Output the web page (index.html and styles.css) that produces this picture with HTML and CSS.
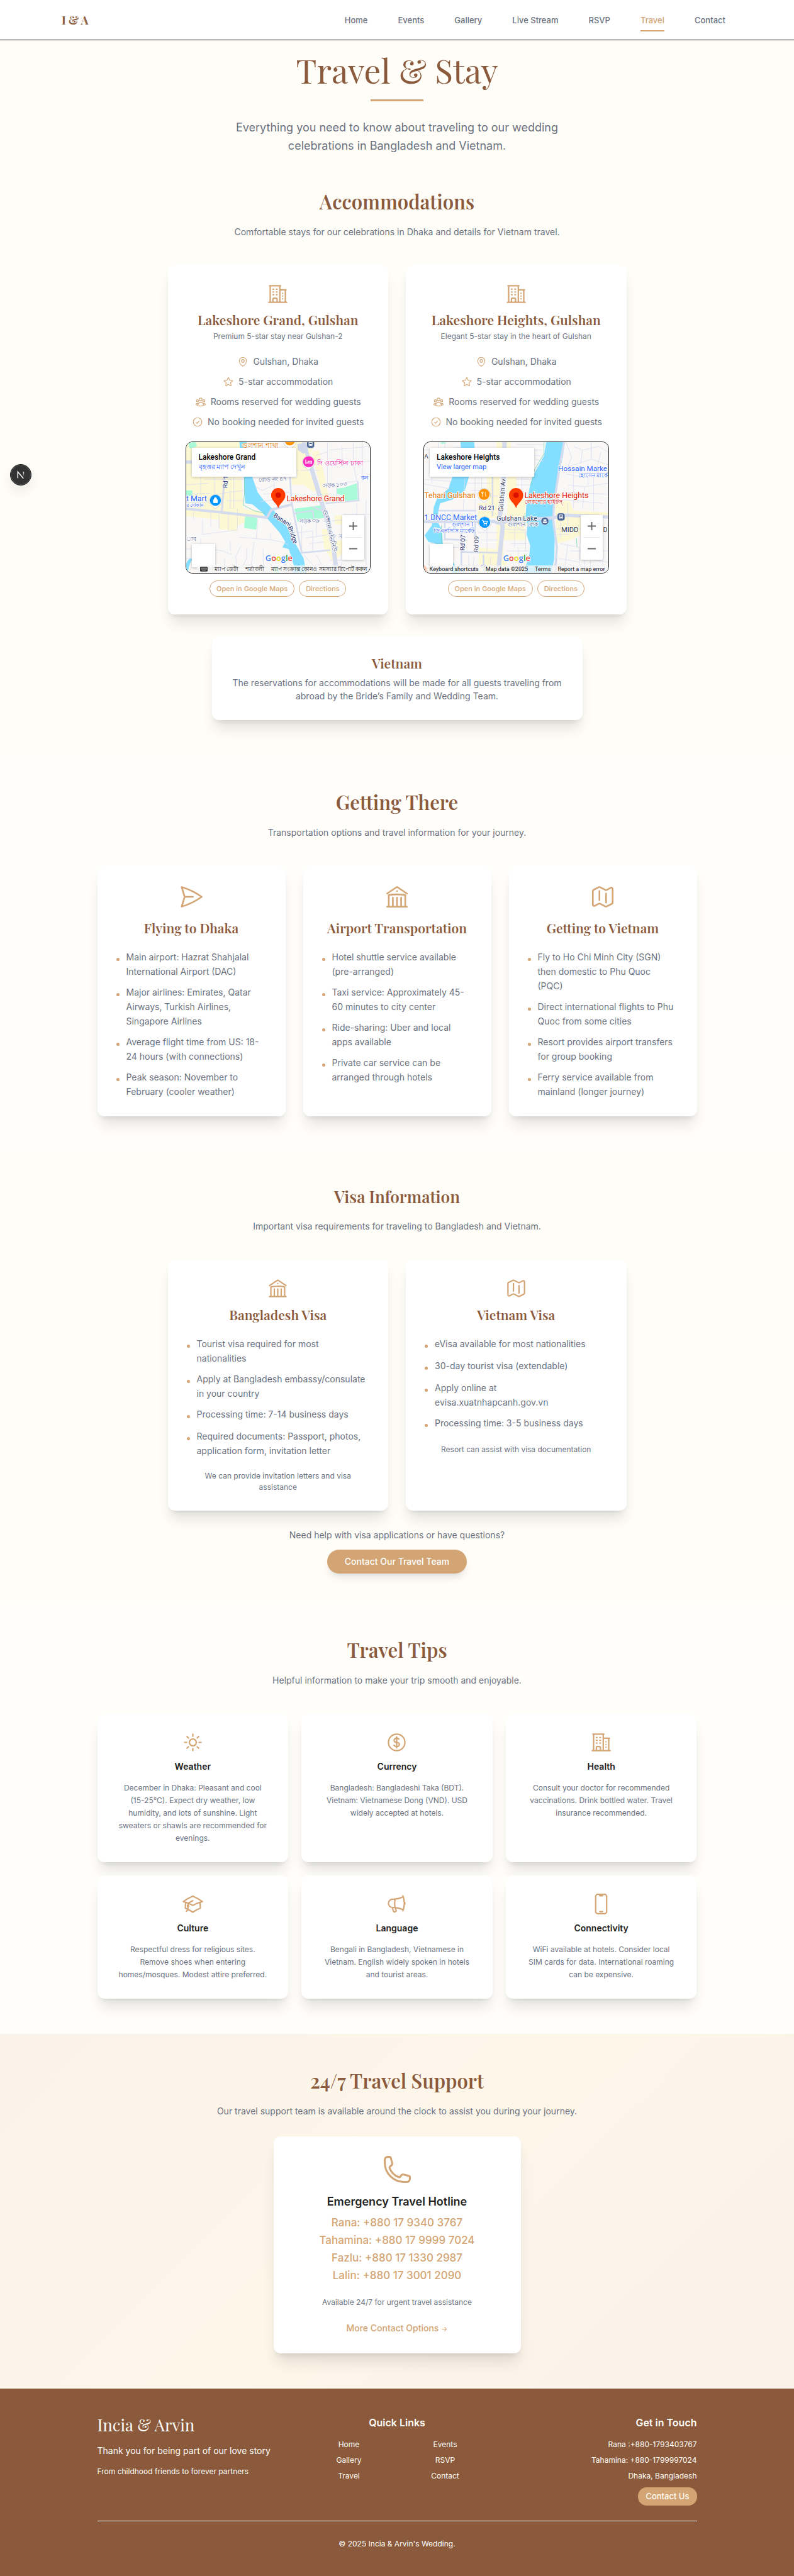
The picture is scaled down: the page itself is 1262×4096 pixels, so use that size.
FILE: index.html
```html
<!DOCTYPE html>
<html lang="en">
<head>
<meta charset="utf-8">
<meta name="viewport" content="width=device-width, initial-scale=1">
<title>Travel &amp; Stay | Incia &amp; Arvin</title>
<link rel="stylesheet" href="styles.css">
</head>
<body>
<svg class="sprite" aria-hidden="true">
  <symbol id="i-building" viewBox="0 0 24 24"><path d="M2.25 21h19.5m-18-18v18m10.5-18v18m6-13.5V21M6.75 6.75h.75m-.75 3h.75m-.75 3h.75m3-6h.75m-.75 3h.75m-.75 3h.75M6.75 21v-3.375c0-.621.504-1.125 1.125-1.125h2.25c.621 0 1.125.504 1.125 1.125V21M3 3h12m-.75 4.5H21m-3.75 3.75h.008v.008h-.008v-.008Zm0 3h.008v.008h-.008v-.008Zm0 3h.008v.008h-.008v-.008Z"/></symbol>
  <symbol id="i-pin" viewBox="0 0 24 24"><path d="M15 10.5a3 3 0 1 1-6 0 3 3 0 0 1 6 0Z"/><path d="M19.5 10.5c0 7.142-7.5 11.25-7.5 11.25S4.5 17.642 4.5 10.5a7.5 7.5 0 1 1 15 0Z"/></symbol>
  <symbol id="i-star" viewBox="0 0 24 24"><path d="M11.48 3.499a.562.562 0 0 1 1.04 0l2.125 5.111a.563.563 0 0 0 .475.345l5.518.442c.499.04.701.663.321.988l-4.204 3.602a.563.563 0 0 0-.182.557l1.285 5.385a.562.562 0 0 1-.84.61l-4.725-2.885a.562.562 0 0 0-.586 0L6.982 20.54a.562.562 0 0 1-.84-.61l1.285-5.386a.562.562 0 0 0-.182-.557l-4.204-3.602a.562.562 0 0 1 .321-.988l5.518-.442a.563.563 0 0 0 .475-.345L11.48 3.5Z"/></symbol>
  <symbol id="i-group" viewBox="0 0 24 24"><path d="M18 18.72a9.094 9.094 0 0 0 3.741-.479 3 3 0 0 0-4.682-2.72m.94 3.198.001.031c0 .225-.012.447-.037.666A11.944 11.944 0 0 1 12 21c-2.17 0-4.207-.576-5.963-1.584A6.062 6.062 0 0 1 6 18.719m12 0a5.971 5.971 0 0 0-.941-3.197m0 0A5.995 5.995 0 0 0 12 12.75a5.995 5.995 0 0 0-5.058 2.772m0 0a3 3 0 0 0-4.681 2.72 8.986 8.986 0 0 0 3.74.477m.94-3.197a5.971 5.971 0 0 0-.94 3.197M15 6.75a3 3 0 1 1-6 0 3 3 0 0 1 6 0Zm6 3a2.25 2.25 0 1 1-4.5 0 2.25 2.25 0 0 1 4.5 0Zm-13.5 0a2.25 2.25 0 1 1-4.5 0 2.25 2.25 0 0 1 4.5 0Z"/></symbol>
  <symbol id="i-check" viewBox="0 0 24 24"><path d="M9 12.75 11.25 15 15 9.75M21 12a9 9 0 1 1-18 0 9 9 0 0 1 18 0Z"/></symbol>
  <symbol id="i-plane" viewBox="0 0 24 24"><path d="M6 12 3.269 3.125A59.769 59.769 0 0 1 21.485 12 59.768 59.768 0 0 1 3.27 20.875L5.999 12Zm0 0h7.5"/></symbol>
  <symbol id="i-library" viewBox="0 0 24 24"><path d="M12 21v-8.25M15.75 21v-8.25M8.25 21v-8.25M3 9l9-6 9 6m-1.5 12V10.332A48.36 48.36 0 0 0 12 9.75c-2.551 0-5.056.2-7.5.582V21M3 21h18M12 6.75h.008v.008H12V6.75Z"/></symbol>
  <symbol id="i-map" viewBox="0 0 24 24"><path d="M9 6.75V15m6-6v8.25m.503 3.498 4.875-2.437c.381-.19.622-.58.622-1.006V4.82c0-.836-.88-1.38-1.628-1.006l-3.869 1.934c-.317.159-.69.159-1.006 0L9.503 3.252a1.125 1.125 0 0 0-1.006 0L3.622 5.689C3.24 5.88 3 6.27 3 6.695V19.18c0 .836.88 1.38 1.628 1.006l3.869-1.934c.317-.159.69-.159 1.006 0l4.994 2.497c.317.158.69.158 1.006 0Z"/></symbol>
  <symbol id="i-sun" viewBox="0 0 24 24"><path d="M12 3v2.25m6.364.386-1.591 1.591M21 12h-2.25m-.386 6.364-1.591-1.591M12 18.75V21m-4.773-4.227-1.591 1.591M5.25 12H3m4.227-4.773L5.636 5.636M15.75 12a3.75 3.75 0 1 1-7.5 0 3.75 3.75 0 0 1 7.5 0Z"/></symbol>
  <symbol id="i-dollar" viewBox="0 0 24 24"><path d="M12 6v12m-3-2.818.879.659c1.171.879 3.07.879 4.242 0 1.172-.879 1.172-2.303 0-3.182C13.536 12.219 12.768 12 12 12c-.725 0-1.45-.22-2.003-.659-1.106-.879-1.106-2.303 0-3.182s2.9-.879 4.006 0l.415.33M21 12a9 9 0 1 1-18 0 9 9 0 0 1 18 0Z"/></symbol>
  <symbol id="i-cap" viewBox="0 0 24 24"><path d="M4.26 10.147a60.438 60.438 0 0 0-.491 6.347A48.62 48.62 0 0 1 12 20.904a48.62 48.62 0 0 1 8.232-4.41 60.46 60.46 0 0 0-.491-6.347m-15.482 0a50.636 50.636 0 0 0-2.658-.813A59.906 59.906 0 0 1 12 3.493a59.903 59.903 0 0 1 10.399 5.84c-.896.248-1.783.52-2.658.814m-15.482 0A50.717 50.717 0 0 1 12 13.489a50.702 50.702 0 0 1 7.74-3.342M6.75 15a.75.75 0 1 0 0-1.5.75.75 0 0 0 0 1.5Zm0 0v-3.675A55.378 55.378 0 0 1 12 8.443m-7.007 11.55A5.981 5.981 0 0 0 6.75 15.75v-1.5"/></symbol>
  <symbol id="i-horn" viewBox="0 0 24 24"><path d="M10.34 15.84c-.688-.06-1.386-.09-2.09-.09H7.5a4.5 4.5 0 1 1 0-9h.75c.704 0 1.402-.03 2.09-.09m0 9.18c.253.962.584 1.892.985 2.783.247.55.06 1.21-.463 1.511l-.657.38c-.551.318-1.26.117-1.527-.461a20.845 20.845 0 0 1-1.44-4.282m3.102.069a18.03 18.03 0 0 1-.59-4.59c0-1.586.205-3.124.59-4.59m0 9.18a23.848 23.848 0 0 1 8.835 2.535M10.34 6.66a23.847 23.847 0 0 0 8.835-2.535m0 0A23.74 23.74 0 0 0 18.795 3m.38 1.125a23.91 23.91 0 0 1 1.014 5.395m-1.014 8.855c-.118.38-.245.754-.38 1.125m.38-1.125a23.91 23.91 0 0 0 1.014-5.395m0-3.46c.495.413.811 1.035.811 1.73 0 .695-.316 1.317-.811 1.73m0-3.46a24.347 24.347 0 0 1 0 3.46"/></symbol>
  <symbol id="i-mobile" viewBox="0 0 24 24"><path d="M10.5 1.5H8.25A2.25 2.25 0 0 0 6 3.75v16.5a2.25 2.25 0 0 0 2.25 2.25h7.5A2.25 2.25 0 0 0 18 20.25V3.75a2.25 2.25 0 0 0-2.25-2.25H13.5m-3 0V3h3V1.5m-3 0h3m-3 18.75h3"/></symbol>
  <symbol id="i-phone" viewBox="0 0 24 24"><path d="M2.25 6.75c0 8.284 6.716 15 15 15h2.25a2.25 2.25 0 0 0 2.25-2.25v-1.372c0-.516-.351-.966-.852-1.091l-4.423-1.106c-.44-.11-.902.055-1.173.417l-.97 1.293c-.282.376-.769.542-1.21.38a12.035 12.035 0 0 1-7.143-7.143c-.162-.441.004-.928.38-1.21l1.293-.97c.363-.271.527-.734.417-1.173L6.963 3.102a1.125 1.125 0 0 0-1.091-.852H4.5A2.25 2.25 0 0 0 2.25 4.5v2.25Z"/></symbol>
  <symbol id="m-drop" viewBox="0 0 76 84"><path d="M38 83 L26 70 A34 34 0 1 1 50 70 Z" fill="#fff" stroke="#b9b9b9" stroke-width="2"/></symbol>
  <symbol id="m-place" viewBox="0 0 80 112"><path d="M40 111C36 84 1 70 1 39a39 39 0 0 1 78 0C79 70 44 84 40 111Z" fill="#ff3c00"/><circle cx="40" cy="39" r="15" fill="#d90f00"/></symbol>
  <symbol id="m-transit" viewBox="0 0 42 42"><rect x="1" y="1" width="40" height="40" rx="13" fill="#46618f" stroke="#fff" stroke-width="2"/><rect x="11" y="9" width="20" height="20" rx="4" fill="#fff"/><rect x="14" y="13" width="14" height="7" fill="#46618f"/><circle cx="16" cy="25" r="2" fill="#46618f"/><circle cx="26" cy="25" r="2" fill="#46618f"/><path d="M13 32l3-4M29 32l-3-4" stroke="#fff" stroke-width="3"/></symbol>
</svg>

<header class="nav">
  <a class="nav-brand" href="#">I &amp; A</a>
  <nav class="nav-links" aria-label="Main">
    <a href="#">Home</a><a href="#">Events</a><a href="#">Gallery</a><a href="#">Live Stream</a><a href="#">RSVP</a><a class="active" href="#" aria-current="page">Travel</a><a href="#">Contact</a>
  </nav>
</header>

<main>
  <section class="section section-first">
    <div class="hero">
      <h1>Travel &amp; Stay</h1>
      <div class="rule"></div>
      <p>Everything you need to know about traveling to our wedding celebrations in Bangladesh and Vietnam.</p>
    </div>
    <h2>Accommodations</h2>
    <p class="lead">Comfortable stays for our celebrations in Dhaka and details for Vietnam travel.</p>
    <div class="grid two">
      <article class="card hotel">
        <svg class="icon"><use href="#i-building"/></svg>
        <h3>Lakeshore Grand, Gulshan</h3>
        <p class="small">Premium 5-star stay near Gulshan-2</p>
        <ul class="facts">
          <li><svg><use href="#i-pin"/></svg>Gulshan, Dhaka</li>
          <li><svg><use href="#i-star"/></svg>5-star accommodation</li>
          <li><svg><use href="#i-group"/></svg>Rooms reserved for wedding guests</li>
          <li><svg><use href="#i-check"/></svg>No booking needed for invited guests</li>
        </ul>
        <div class="map">
          <svg class="map-art" viewBox="51 66 1002 714" preserveAspectRatio="xMidYMid slice" role="img" aria-label="Map of Lakeshore Grand">
            <rect x="51" y="66" width="1002" height="714" fill="#faf8f7"/>
            <g fill="#fdf8d4">
              <path d="M51 66H340L362 430L480 450L470 470L330 520L325 552L230 540V490L51 470V390H80V330H51Z"/>
              <path d="M600 66H760L700 190L770 330L740 335L690 300H625V260H655L650 200L600 150Z"/>
              <path d="M735 120L775 110L830 380L800 395Z"/>
              <path d="M790 540L840 540V610L905 600V670L850 720L800 640Z"/>
              <path d="M860 465h45v50h-45z"/>
            </g>
            <g fill="#a9fbd8">
              <path d="M60 66h42l8 25-40 10z"/><path d="M51 330h34v28l-34 10z"/>
              <path d="M372 470l66 10-6 64-66-10z"/>
              <path d="M640 430l150-20 12 70-145 20z"/>
              <path d="M870 320l40-5 70-25 6 90-70 8-8-30-38-10z"/>
              <path d="M528 745q30-10 30 35h-30z"/>
            </g>
            <path d="M340 66L365 255L372 400L410 405L460 445L490 480L560 560L590 610L575 640L610 650L640 750L630 780H705L690 700L640 610L590 510L510 420L470 380L440 340L412 260L380 66Z" fill="#84deff"/>
            <path d="M51 730Q65 690 85 705Q65 730 60 780H51Z" fill="#84deff"/>
            <path d="M368 255V350L362 410L420 440L480 455" fill="none" stroke="#7bd6b5" stroke-width="3"/>
            <g fill="none" stroke="#dbdfef" stroke-width="3">
              <path d="M51 300L170 290M90 90V240M130 255V440M165 120V255M205 255V350M310 250V430M330 430V550M51 350L180 345M140 490V570L325 545M185 445V530M230 460V540M280 460V545"/>
              <path d="M150 270H365M215 350L360 330M270 385H360M290 330V430M51 395H180M90 445V490"/>
              <path d="M430 310L465 330L530 300M470 350L620 340M530 260V410M455 390L540 380M610 220H660M550 230L625 260"/>
              <path d="M340 585L515 600L570 610L605 625M440 490L432 595M510 560V600M290 610L292 660M350 630L320 690L330 780M380 640V700L350 760M420 610L400 780M470 650V740M51 650L160 645L250 660L300 680M130 590V650M51 700L200 690M260 700V780M200 660V760"/>
              <path d="M670 220H780M755 140L820 120M820 66V290M830 190L1053 170M900 90V180M960 66V180L980 280M1010 66V280M830 110L1053 90M790 300L980 280M870 290V400"/>
              <path d="M660 560L740 550M680 520V670M740 550V670M720 620L800 610M760 480V580M700 590L830 570M800 500L905 490M980 400V500M1030 380V780M905 460H1053M830 710H905M880 780L900 720M690 680L780 780M760 680L800 760"/>
            </g>
            <g fill="none" stroke="#d5dcee">
              <path d="M51 430L250 450L490 478L515 435L630 405" stroke-width="14"/>
              <path d="M730 200L790 400L850 610L870 780" stroke-width="24"/>
              <path d="M690 66L730 200" stroke-width="20"/>
              <path d="M260 255L245 445" stroke-width="10"/>
              <path d="M612 200L625 400L680 670L835 655" stroke-width="9"/>
              <path d="M640 455L740 440L745 480M740 420L790 440M810 400L990 385L985 280" stroke-width="8"/>
              <path d="M51 175H90" stroke-width="18"/>
            </g>
            <path d="M655 78L700 70L715 110L690 130L660 110Z" fill="#cfd8ec"/>
            <use href="#m-drop" x="577" y="25" width="76" height="84"/><circle cx="615" cy="57" r="28" fill="#ff9100"/><path d="M606 50v18M622 50v18" stroke="#fff" stroke-width="5"/>
            <use href="#m-transit" x="706" y="56" width="44" height="44"/>
            <use href="#m-drop" x="679" y="138" width="76" height="84"/><circle cx="717" cy="174" r="30" fill="#ff2ebd"/><path d="M702 162v24M702 180h31v6M733 180v-9h-19v9" fill="none" stroke="#fff" stroke-width="4"/>
            <use href="#m-drop" x="172" y="348" width="76" height="84"/><circle cx="210" cy="384" r="30" fill="#0095ff"/><path d="M199 380h22v17h-22zM204 380v-6a6 6 0 0 1 12 0v6" fill="#fff" stroke="#fff" stroke-width="3"/>
            <use href="#m-place" x="512" y="317" width="80" height="112"/>
            <g class="map-label">
              <text x="352" y="96" font-size="38" fill="#e37400">গুলশান শাখা</text>
              <text x="764" y="192" font-size="38" fill="#f0139f">দি ওয়েস্টিন ঢাকা</text>
              <text x="446" y="284" font-size="32" fill="#56679a" transform="rotate(-3 446 284)">রোড নং ৪৭</text>
              <text x="798" y="316" font-size="32" fill="#56679a" transform="rotate(-5 798 316)">সড়ক ১০৩</text>
              <text x="1002" y="272" font-size="32" fill="#2962ff">কন</text>
              <text x="666" y="510" font-size="32" fill="#56679a" transform="rotate(-3 666 510)">সড়ক ৩৯</text>
              <text x="51" y="388" font-size="42" fill="#2962ff">t Mart</text>
              <text x="51" y="420" font-size="28" fill="#2962ff">র দোকান</text>
              <text x="51" y="606" font-size="32" fill="#56679a">াব</text>
              <text x="880" y="592" font-size="30" fill="#56679a">স</text>
              <text x="274" y="318" font-size="34" fill="#1f2f73" transform="rotate(-86 274 318)">Rd 1</text>
              <text x="524" y="472" font-size="34" fill="#1f2f73" transform="rotate(33 524 472)">Banani</text>
              <text x="604" y="530" font-size="34" fill="#1f2f73" transform="rotate(70 604 530)">Bridge</text>
              <text x="796" y="436" font-size="34" fill="#44558c" transform="rotate(77 796 436)">গুলশান এভিনিউ</text>
              <text x="597" y="390" font-size="42" fill="#dd1400">Lakeshore Grand</text>
            </g>
            <text class="map-logo" x="482" y="714" font-size="44"><tspan fill="#4285f4">G</tspan><tspan fill="#ea4335">o</tspan><tspan fill="#e0d000">o</tspan><tspan fill="#4285f4">g</tspan><tspan fill="#1ba355">l</tspan><tspan fill="#ea4335">e</tspan></text>
          </svg>
          <div class="map-info"><strong>Lakeshore Grand</strong><a href="#">বৃহত্তর ম্যাপ দেখুন</a></div>
          <div class="map-layer"></div>
          <div class="map-zoom"><button type="button" aria-label="Zoom in"><svg viewBox="0 0 16 16"><path d="M8 1v14M1 8h14"/></svg></button><button type="button" aria-label="Zoom out"><svg viewBox="0 0 16 16"><path d="M1 8h14"/></svg></button></div>
          <div class="map-bar"><svg class="keys" viewBox="0 0 42 26"><rect width="42" height="26" rx="4" fill="#333"/><path d="M5 7h32M5 13h32M12 20h18" stroke="#fff" stroke-width="3" stroke-dasharray="4 3"/></svg><span>ম্যাপ ডেটা</span><a href="#">শর্তাবলী</a><a href="#">ম্যাপ সংক্রান্ত কোনও সমস্যার রিপোর্ট করুন</a></div>
        </div>
        <div class="pills"><a href="#">Open in Google Maps</a><a href="#">Directions</a></div>
      </article>

      <article class="card hotel">
        <svg class="icon"><use href="#i-building"/></svg>
        <h3>Lakeshore Heights, Gulshan</h3>
        <p class="small">Elegant 5-star stay in the heart of Gulshan</p>
        <ul class="facts">
          <li><svg><use href="#i-pin"/></svg>Gulshan, Dhaka</li>
          <li><svg><use href="#i-star"/></svg>5-star accommodation</li>
          <li><svg><use href="#i-group"/></svg>Rooms reserved for wedding guests</li>
          <li><svg><use href="#i-check"/></svg>No booking needed for invited guests</li>
        </ul>
        <div class="map">
          <svg class="map-art" viewBox="87 66 1002 714" preserveAspectRatio="xMidYMid slice" role="img" aria-label="Map of Lakeshore Heights">
            <rect x="87" y="66" width="1002" height="714" fill="#faf8f7"/>
            <g fill="#fdf8d4">
              <path d="M480 66H560V100H480Z"/><path d="M430 255H500V480H380V400H430Z"/>
              <path d="M540 255H590V350L640 390V600H520V690L540 700L535 780H385V640L480 650V520L540 480Z"/>
              <path d="M800 390L880 385L900 440L1089 450V480L940 490V570L880 600L810 620Z"/>
            </g>
            <path d="M178 66h28v10h-28z" fill="#a9fbd8"/>
            <path d="M285 66H360L365 140L330 260L310 330L240 380L175 400L165 440L160 500L185 545L190 640L270 760L280 780H240L200 700L150 620L110 610L90 575L130 520L140 420L160 370L220 320L250 230L290 120Z" fill="#84deff"/>
            <path d="M752 66H848L845 130L815 280L790 420L785 490L800 520L796 700L780 780H630L660 680L665 630L645 570L650 520L640 470L645 400L665 300L680 250L740 140Z" fill="#84deff"/>
            <path d="M87 735L105 755L112 780H87Z" fill="#ffc9ae"/>
            <path d="M740 66V130L690 215L668 300M917 592L920 640M182 520V620" fill="none" stroke="#7bd6b5" stroke-width="3"/>
            <g fill="none" stroke="#dbdfef" stroke-width="3">
              <path d="M165 66L160 170M87 110L290 95M87 270L230 280L225 300M87 295L225 320M130 230V290M200 66V200"/>
              <path d="M590 80H735M595 110H730M600 140H720M690 160L740 170M585 270H670M585 300H665M620 255V340M650 340L585 330"/>
              <path d="M310 260L300 440M365 255V460M340 330H440M330 290H460M400 255V320M430 360H490M200 440V480L360 470M240 445V520"/>
              <path d="M860 66L890 150L870 200L1000 160L1089 190M900 90L950 110L1040 90L1089 120M950 110L940 180M1000 66V160M860 240L960 260L1040 230M870 300L960 310L1089 290M900 210V430M960 310L950 430M1010 240V440M850 340L1089 350M840 380L1060 400M1050 120L1030 200M980 190V300"/>
              <path d="M830 480V590M870 400V540M805 540H940M810 570H880M830 620L935 640L930 780M870 620L850 780M880 660H1089M1000 600L990 780M1060 640V780M820 700L930 720M940 700L1089 720M960 650V780"/>
              <path d="M530 500L650 560M550 560H645M560 620H650M580 500V640M520 540L645 545M540 660H660M560 700H655M600 640V780M640 560V660"/>
              <path d="M190 600H290M200 560H370M210 640H280M380 560H490M430 520V660M400 600H490M330 680V780M240 680V780M360 690L350 780M450 690L445 780M290 740H400"/>
            </g>
            <g fill="none" stroke="#d5dcee">
              <path d="M87 500H470Q510 520 540 495L780 480" stroke-width="18"/>
              <path d="M525 66V150L520 260L500 470L515 530L490 780" stroke-width="24"/>
              <path d="M780 480L860 465L1089 475" stroke-width="18"/>
              <path d="M850 66L825 200L795 400L790 490L810 640L800 780" stroke-width="12"/>
              <path d="M165 440H370M200 500V595L300 600M295 665L500 670M290 520V780M365 500V670M460 200V470M410 680L415 780" stroke-width="9"/>
            </g>
            <use href="#m-drop" x="376" y="315" width="76" height="84"/><circle cx="414" cy="351" r="30" fill="#ff9100"/><path d="M405 337v28M401 337v8q4 5 8 0v-8M423 338q-5 6-2 15h2v12" fill="none" stroke="#fff" stroke-width="3"/>
            <use href="#m-drop" x="379" y="468" width="76" height="84"/><circle cx="417" cy="504" r="30" fill="#0095ff"/><path d="M402 492h6l6 18h14l4-12h-22" fill="none" stroke="#fff" stroke-width="4"/><circle cx="414" cy="518" r="3" fill="#fff"/><circle cx="427" cy="518" r="3" fill="#fff"/>
            <use href="#m-transit" x="811" y="452" width="44" height="44"/>
            <circle cx="745" cy="497" r="21" fill="#46618f" stroke="#fff" stroke-width="2"/><path d="M737 496v-9h16v9M732 499h26l-4 9h-18z" fill="#fff"/>
            <use href="#m-place" x="548" y="317" width="80" height="112"/>
            <g class="map-label">
              <text x="88" y="157" font-size="34" fill="#333">A</text>
              <text x="817" y="226" font-size="40" fill="#2962ff">Hossain Marke</text>
              <text x="926" y="258" font-size="30" fill="#2962ff">হোসেন মার্কে</text>
              <text x="88" y="372" font-size="42" fill="#e37400">Tehari Gulshan</text>
              <text x="386" y="438" font-size="34" fill="#1f2f73">Rd 21</text>
              <text x="88" y="492" font-size="42" fill="#2962ff">1 DNCC Market</text>
              <text x="238" y="526" font-size="30" fill="#2962ff">গুলশান 1</text>
              <text x="138" y="560" font-size="30" fill="#2962ff">ডিএনসিসি মার্কেট</text>
              <text x="482" y="494" font-size="37" fill="#3b5076">Gulshan Lake</text>
              <text x="544" y="526" font-size="30" fill="#46618f">গুলশান লেক</text>
              <text x="634" y="372" font-size="42" fill="#dd1400">Lakeshore Heights</text>
              <text x="634" y="404" font-size="30" fill="#dd1400">লেকশোর হাইটস্</text>
              <text x="516" y="446" font-size="36" fill="#333d5c" transform="rotate(-85 516 446)">Gulshan Av</text>
              <text x="308" y="658" font-size="34" fill="#1f2f73" transform="rotate(-88 308 658)">Rd 07</text>
              <text x="382" y="666" font-size="34" fill="#56607c" transform="rotate(-88 382 666)">Rd 09</text>
              <text x="420" y="752" font-size="34" fill="#56679a" transform="rotate(-88 420 752)">2</text>
              <text x="834" y="556" font-size="38" fill="#333">MIDD</text>
              <text x="1062" y="556" font-size="36" fill="#333">D</text>
            </g>
            <text class="map-logo" x="518" y="714" font-size="44"><tspan fill="#4285f4">G</tspan><tspan fill="#ea4335">o</tspan><tspan fill="#e0d000">o</tspan><tspan fill="#4285f4">g</tspan><tspan fill="#1ba355">l</tspan><tspan fill="#ea4335">e</tspan></text>
          </svg>
          <div class="map-info"><strong>Lakeshore Heights</strong><a href="#">View larger map</a></div>
          <div class="map-layer"></div>
          <div class="map-zoom"><button type="button" aria-label="Zoom in"><svg viewBox="0 0 16 16"><path d="M8 1v14M1 8h14"/></svg></button><button type="button" aria-label="Zoom out"><svg viewBox="0 0 16 16"><path d="M1 8h14"/></svg></button></div>
          <div class="map-bar"><span>Keyboard shortcuts</span><span>Map data ©2025</span><a href="#">Terms</a><a href="#">Report a map error</a></div>
        </div>
        <div class="pills"><a href="#">Open in Google Maps</a><a href="#">Directions</a></div>
      </article>
    </div>
    <article class="card vietnam">
      <h3>Vietnam</h3>
      <p>The reservations for accommodations will be made for all guests traveling from abroad by the Bride’s Family and Wedding Team.</p>
    </article>
  </section>

  <section class="section alt">
    <h2>Getting There</h2>
    <p class="lead">Transportation options and travel information for your journey.</p>
    <div class="grid three">
      <article class="card trip">
        <svg class="icon"><use href="#i-plane"/></svg>
        <h3>Flying to Dhaka</h3>
        <ul class="list">
          <li>Main airport: Hazrat Shahjalal International Airport (DAC)</li>
          <li>Major airlines: Emirates, Qatar Airways, Turkish Airlines, Singapore Airlines</li>
          <li>Average flight time from US: 18-24 hours (with connections)</li>
          <li>Peak season: November to February (cooler weather)</li>
        </ul>
      </article>
      <article class="card trip">
        <svg class="icon"><use href="#i-library"/></svg>
        <h3>Airport Transportation</h3>
        <ul class="list">
          <li>Hotel shuttle service available (pre-arranged)</li>
          <li>Taxi service: Approximately 45-60 minutes to city center</li>
          <li>Ride-sharing: Uber and local apps available</li>
          <li>Private car service can be arranged through hotels</li>
        </ul>
      </article>
      <article class="card trip">
        <svg class="icon"><use href="#i-map"/></svg>
        <h3>Getting to Vietnam</h3>
        <ul class="list">
          <li>Fly to Ho Chi Minh City (SGN) then domestic to Phu Quoc (PQC)</li>
          <li>Direct international flights to Phu Quoc from some cities</li>
          <li>Resort provides airport transfers for group booking</li>
          <li>Ferry service available from mainland (longer journey)</li>
        </ul>
      </article>
    </div>
  </section>

  <section class="section visa">
    <h2>Visa Information</h2>
    <p class="lead">Important visa requirements for traveling to Bangladesh and Vietnam.</p>
    <div class="grid two">
      <article class="card">
        <svg class="icon"><use href="#i-library"/></svg>
        <h3>Bangladesh Visa</h3>
        <ul class="list">
          <li>Tourist visa required for most nationalities</li>
          <li>Apply at Bangladesh embassy/consulate in your country</li>
          <li>Processing time: 7-14 business days</li>
          <li>Required documents: Passport, photos, application form, invitation letter</li>
        </ul>
        <p class="small note">We can provide invitation letters and visa assistance</p>
      </article>
      <article class="card">
        <svg class="icon"><use href="#i-map"/></svg>
        <h3>Vietnam Visa</h3>
        <ul class="list">
          <li>eVisa available for most nationalities</li>
          <li>30-day tourist visa (extendable)</li>
          <li>Apply online at evisa.xuatnhapcanh.gov.vn</li>
          <li>Processing time: 3-5 business days</li>
        </ul>
        <p class="small note">Resort can assist with visa documentation</p>
      </article>
    </div>
    <p class="help">Need help with visa applications or have questions?</p>
    <a class="cta" href="#">Contact Our Travel Team</a>
  </section>

  <section class="section alt">
    <h2>Travel Tips</h2>
    <p class="lead">Helpful information to make your trip smooth and enjoyable.</p>
    <div class="grid three tips">
      <article class="card tip"><svg class="icon"><use href="#i-sun"/></svg><h4>Weather</h4><p>December in Dhaka: Pleasant and cool (15-25°C). Expect dry weather, low humidity, and lots of sunshine. Light sweaters or shawls are recommended for evenings.</p></article>
      <article class="card tip"><svg class="icon"><use href="#i-dollar"/></svg><h4>Currency</h4><p>Bangladesh: Bangladeshi Taka (BDT). Vietnam: Vietnamese Dong (VND). USD widely accepted at hotels.</p></article>
      <article class="card tip"><svg class="icon"><use href="#i-building"/></svg><h4>Health</h4><p>Consult your doctor for recommended vaccinations. Drink bottled water. Travel insurance recommended.</p></article>
      <article class="card tip"><svg class="icon"><use href="#i-cap"/></svg><h4>Culture</h4><p>Respectful dress for religious sites. Remove shoes when entering homes/mosques. Modest attire preferred.</p></article>
      <article class="card tip"><svg class="icon"><use href="#i-horn"/></svg><h4>Language</h4><p>Bengali in Bangladesh, Vietnamese in Vietnam. English widely spoken in hotels and tourist areas.</p></article>
      <article class="card tip"><svg class="icon"><use href="#i-mobile"/></svg><h4>Connectivity</h4><p>WiFi available at hotels. Consider local SIM cards for data. International roaming can be expensive.</p></article>
    </div>
  </section>

  <section class="section support">
    <h2>24/7 Travel Support</h2>
    <p class="lead">Our travel support team is available around the clock to assist you during your journey.</p>
    <article class="card hotline">
      <svg class="icon"><use href="#i-phone"/></svg>
      <h4>Emergency Travel Hotline</h4>
      <ul class="phones">
        <li><a href="tel:+8801793403767">Rana: +880 17 9340 3767</a></li>
        <li><a href="tel:+8801799997024">Tahamina: +880 17 9999 7024</a></li>
        <li><a href="tel:+8801713302987">Fazlu: +880 17 1330 2987</a></li>
        <li><a href="tel:+8801730012090">Lalin: +880 17 3001 2090</a></li>
      </ul>
      <p class="small">Available 24/7 for urgent travel assistance</p>
      <a class="more" href="#">More Contact Options <span>→</span></a>
    </article>
  </section>
</main>

<footer class="footer">
  <div class="footer-cols">
    <div class="footer-about">
      <h2>Incia &amp; Arvin</h2>
      <p>Thank you for being part of our love story</p>
      <p class="tag">From childhood friends to forever partners</p>
    </div>
    <div class="footer-links">
      <h3>Quick Links</h3>
      <ul><li><a href="#">Home</a></li><li><a href="#">Events</a></li><li><a href="#">Gallery</a></li><li><a href="#">RSVP</a></li><li><a href="#">Travel</a></li><li><a href="#">Contact</a></li></ul>
    </div>
    <div class="footer-contact">
      <h3>Get in Touch</h3>
      <ul><li>Rana :+880-1793403767</li><li>Tahamina: +880-1799997024</li><li>Dhaka, Bangladesh</li></ul>
      <a class="footer-cta" href="#">Contact Us</a>
    </div>
  </div>
  <p class="copyright">© 2025 Incia &amp; Arvin's Wedding.</p>
</footer>

<button class="dev-badge" type="button" aria-label="Open tools"><svg viewBox="0 0 34 34" fill="none"><defs><linearGradient id="n-fade" x1="0" y1="0" x2="0" y2="1"><stop offset="0" stop-color="#fff"/><stop offset="1" stop-color="#fff" stop-opacity="0"/></linearGradient></defs><path d="M12 22.500V12L21.500 23" stroke="#fff" stroke-width="1.600"/><path d="M21 12h1.500v8H21z" fill="url(#n-fade)"/></svg></button>
</body>
</html>
```

FILE: styles.css
```css
:root {
  --brown: #8b5a3c;
  --gold: #d4a574;
  --gray: #6b7280;
  --ink: #1f1f1f;
  --cream: #fffdf7;
  --serif: "Playfair Display", "Liberation Serif", serif;
}
* { box-sizing: border-box; margin: 0; padding: 0; }
body {
  position: relative;
  background: var(--cream);
  color: var(--gray);
  font-family: Inter, "Liberation Sans", sans-serif;
  font-size: 14px;
  line-height: 22px;
}
a { color: inherit; text-decoration: none; }
ul { list-style: none; }
.sprite { display: none; }

/* Navigation */
.nav {
  position: relative;
  display: flex;
  align-items: center;
  justify-content: space-between;
  height: 64px;
  padding: 0 109px 0 98px;
  background: #fff;
  border-bottom: 1px solid var(--ink);
  box-shadow: 0 1px 2px rgba(0, 0, 0, .06);
}
.nav-brand { font: bold 18px/24px var(--serif); color: var(--brown); }
.nav-links { display: flex; gap: 48px; font-size: 13px; font-weight: 500; }
.nav-links a { padding: 8px 0 6px; line-height: 20px; border-bottom: 2px solid transparent; }
.nav-links .active { color: var(--gold); border-color: var(--gold); }

/* Sections */
.section { padding: 56px 28px; text-align: center; }
.section-first { padding-top: 18px; }
.alt { background: #fffefb; }
.visa { padding-bottom: 47px; }
.support { background: linear-gradient(135deg, #fbf2ea, #fdf6e9 50%, #faf1e9); }
.hero { max-width: 560px; margin: 0 auto 56px; }
.hero h1 { font: 53px/58px var(--serif); color: var(--brown); }
.hero p { font-size: 18px; line-height: 29px; }
.rule { width: 84px; height: 3px; margin: 18px auto 27px; background: var(--gold); }
h2, h3 { font-family: var(--serif); font-weight: 600; color: var(--brown); }
h2 { font-size: 31px; line-height: 36px; }
h3 { font-size: 21px; line-height: 24px; }
h4 { font-size: 14px; line-height: 21px; font-weight: 600; color: var(--ink); }
.visa h2 { font-size: 26px; line-height: 32px; }
.lead { margin: 20px 0 42px; }
.small { font-size: 12px; line-height: 18px; }

/* Cards */
.grid { display: grid; margin: 0 auto; }
.two { grid-template-columns: repeat(2, 1fr); gap: 28px; max-width: 729px; }
.three { grid-template-columns: repeat(3, 1fr); gap: 28px; max-width: 953px; }
.tips { gap: 21px; }
.card {
  padding: 28px;
  background: #fff;
  border-radius: 11px;
  box-shadow: 0 18px 22px -4px rgba(0, 0, 0, .1), 0 7px 9px -5px rgba(0, 0, 0, .1);
}
.icon { display: block; width: 35px; height: 35px; margin: 0 auto 12px; }
.icon, .facts svg { fill: none; stroke: var(--gold); stroke-width: 1.5; stroke-linecap: round; stroke-linejoin: round; }
.trip .icon { width: 42px; height: 42px; margin-bottom: 16px; }
.trip .list { padding-right: 4px; }
.tip { padding: 28px 31px; }
.tip .icon { margin-bottom: 10px; }
.tip p { margin-top: 14px; font-size: 12px; line-height: 20px; }
.vietnam { max-width: 589px; margin: 35px auto 0; }
.vietnam h3 { line-height: 28px; }
.vietnam p { margin-top: 7px; line-height: 21px; }
.list { display: grid; gap: 10px; margin-top: 23px; text-align: left; line-height: 23px; }
.list li { position: relative; min-height: 25px; padding-left: 18px; }
.list li::before {
  content: "";
  position: absolute;
  left: 2px;
  top: 13px;
  width: 5px;
  height: 5px;
  border-radius: 50%;
  background: var(--gold);
}
.note { margin-top: 20px; }
.help { margin: 28px 0 12px; }
.cta {
  display: inline-block;
  padding: 8px 28px;
  border-radius: 19px;
  background: var(--gold);
  color: #fff;
  font-weight: 500;
  box-shadow: 0 9px 13px -3px rgba(0, 0, 0, .1), 0 4px 5px -4px rgba(0, 0, 0, .1);
  vertical-align: top;
}

/* Hotels */
.hotel .icon { margin-bottom: 11px; }
.hotel .small { margin-top: 6px; }
.facts { display: grid; gap: 10px; margin: 20px 0; }
.facts li { display: flex; align-items: center; justify-content: center; gap: 7px; }
.facts svg { width: 18px; height: 18px; flex: none; }
.map {
  position: relative;
  height: 210px;
  overflow: hidden;
  border: 1px solid var(--ink);
  border-radius: 11px;
  font-family: Roboto, "Noto Sans", sans-serif;
  text-align: left;
}
.map-art { display: block; width: 100%; height: 100%; }
.map-label { paint-order: stroke; stroke: #fff; stroke-width: 6px; stroke-linejoin: round; }
.map-logo { font-family: "Open Sans", sans-serif; font-weight: 600; paint-order: stroke; stroke: #fff; stroke-width: 5px; }
.map-info, .map-layer, .map-zoom { position: absolute; background: #fff; border-radius: 1px; box-shadow: 0 1px 4px rgba(0, 0, 0, .25); }
.map-info { top: 9px; left: 9px; width: 166px; height: 46px; padding: 8px 11px; }
.map-info strong { display: block; font-size: 12px; line-height: 15px; font-weight: 500; color: #000; }
.map-info a { display: block; font-size: 11px; line-height: 15px; color: #2962ff; }
.map-layer { left: 9px; bottom: 9px; width: 37px; height: 37px; }
.map-zoom { right: 9px; bottom: 21px; width: 35px; padding: 0 4px; }
.map-zoom button { display: grid; place-items: center; width: 27px; height: 35px; border: 0; background: none; }
.map-zoom button + button { height: 36px; border-top: 1px solid #e6e6e6; }
.map-zoom svg { width: 15px; height: 15px; stroke: #666; stroke-width: 2; }
.map-bar {
  position: absolute;
  right: 0;
  bottom: 0;
  display: flex;
  gap: 11px;
  align-items: center;
  height: 12px;
  padding: 0 5px;
  background: rgba(245, 245, 245, .75);
  color: #111;
  font-size: 9px;
  line-height: 12px;
  white-space: nowrap;
}
.keys { width: 12px; height: 8px; }
.pills { display: flex; justify-content: center; gap: 7px; margin-top: 11px; }
.pills a { padding: 0 10px; border: 1px solid var(--gold); border-radius: 13px; font-size: 11px; line-height: 24px; font-weight: 500; color: var(--gold); }

/* Hotline */
.support .lead { margin-bottom: 29px; }
.hotline { max-width: 393px; margin: 0 auto; }
.hotline .icon { width: 49px; height: 49px; margin-bottom: 14px; }
.hotline h4 { font-size: 18px; line-height: 25px; }
.phones { margin: 7px 0 20px; font-size: 17px; line-height: 28px; font-weight: 500; color: var(--gold); }
.more { display: block; margin-top: 21px; font-weight: 500; color: var(--gold); }
.more span { font-size: 11px; }

/* Footer */
.footer { padding: 42px 28px; background: var(--brown); color: #fffdf7; font-size: 12px; line-height: 18px; }
.footer-cols {
  display: grid;
  grid-template-columns: repeat(3, 1fr);
  gap: 28px;
  max-width: 953px;
  margin: 0 auto;
  padding-bottom: 24px;
  border-bottom: 1px solid #fffdf7;
}
.footer h2 { font-size: 26px; line-height: 32px; font-weight: normal; color: inherit; }
.footer h3 { margin-bottom: 14px; font: 600 16px/24px Inter, sans-serif; color: inherit; }
.footer-about p { margin-top: 14px; font-size: 14px; line-height: 22px; }
.footer-about .tag { margin-top: 13px; font-size: 12px; line-height: 18px; }
.footer-links { text-align: center; }
.footer-links ul { display: grid; grid-template-columns: 1fr 1fr; gap: 7px; }
.footer-contact { text-align: right; }
.footer-contact ul { display: grid; gap: 7px; }
.footer-cta { display: inline-block; margin-top: 9px; padding: 5px 12px; border-radius: 14px; background: var(--gold); line-height: 19px; font-size: 13px; font-weight: 500; vertical-align: top; }
.copyright { margin-top: 27px; text-align: center; }

/* Floating tools badge, above the page content */
.dev-badge {
  position: absolute;
  left: 16px;
  top: 738px;
  width: 34px;
  height: 34px;
  border: 1px solid #222;
  border-radius: 50%;
  background: #333;
  box-shadow: inset 0 0 0 1px #555, 0 9px 20px rgba(0, 0, 0, .08);
}
.dev-badge svg { display: block; width: 100%; height: 100%; }
```
